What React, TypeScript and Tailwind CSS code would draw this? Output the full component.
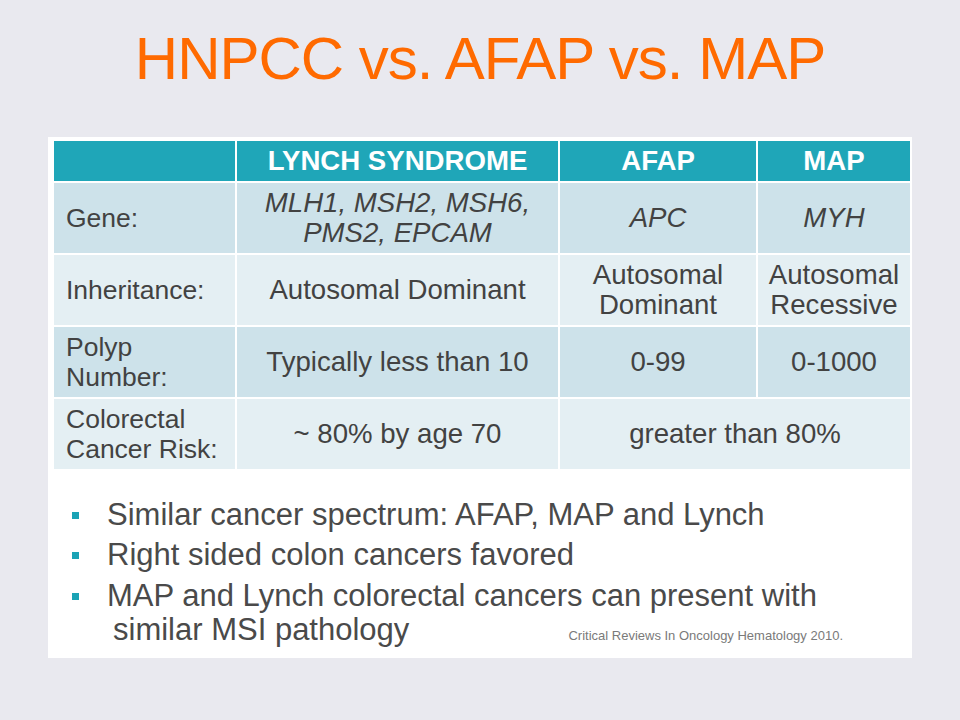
import React from "react";

const dark = "bg-[#cde2ea]";
const light = "bg-[#e4eff3]";

function Label({ children, bg }: { children: React.ReactNode; bg: string }) {
  return (
    <div className={`${bg} flex items-center pl-[12px] text-[26.5px] leading-[30px] text-[#424242]`}>
      {children}
    </div>
  );
}

function Val({ children, bg, className = "" }: { children: React.ReactNode; bg: string; className?: string }) {
  return (
    <div className={`${bg} flex items-center justify-center text-center text-[27.6px] leading-[30px] text-[#424242] ${className}`}>
      {children}
    </div>
  );
}

function Head({ children }: { children?: React.ReactNode }) {
  return (
    <div className="bg-[#1fa6b8] flex items-center justify-center text-white font-bold text-[27.6px] leading-none">
      {children}
    </div>
  );
}

function Bullet() {
  return <span className="w-[7px] h-[7px] bg-[#1aa3b5] ml-[18px] mr-[28px] shrink-0" />;
}

export default function App() {
  return (
    <div
      className="w-[960px] h-[720px] bg-[#e9e9ef] overflow-hidden flex flex-col"
      style={{ fontFamily: '"Liberation Sans", Arial, sans-serif' }}
    >
      <div className="h-[137px] pt-[29px] flex justify-center">
        <h1 className="text-[60px] leading-[60px] text-[#ff6a00] tracking-[-1px]">
          HNPCC vs. AFAP vs. MAP
        </h1>
      </div>
      <div className="ml-[48px] w-[864px] h-[521px] bg-white pt-[4px] pl-[6px] pr-[2px]">
        <div className="grid grid-cols-[181px_321px_196px_152px] grid-rows-[40px_70px_70px_70px_70px] gap-[2px]">
          <Head />
          <Head>LYNCH SYNDROME</Head>
          <Head>AFAP</Head>
          <Head>MAP</Head>

          <Label bg={dark}>Gene:</Label>
          <Val bg={dark} className="italic">
            <span>
              MLH1, MSH2, MSH6,
              <br />
              PMS2, EPCAM
            </span>
          </Val>
          <Val bg={dark} className="italic">APC</Val>
          <Val bg={dark} className="italic">MYH</Val>

          <Label bg={light}>Inheritance:</Label>
          <Val bg={light}>Autosomal Dominant</Val>
          <Val bg={light}>
            <span>
              Autosomal
              <br />
              Dominant
            </span>
          </Val>
          <Val bg={light}>
            <span>
              Autosomal
              <br />
              Recessive
            </span>
          </Val>

          <Label bg={dark}>
            <span>
              Polyp
              <br />
              Number:
            </span>
          </Label>
          <Val bg={dark}>Typically less than 10</Val>
          <Val bg={dark}>0-99</Val>
          <Val bg={dark}>0-1000</Val>

          <Label bg={light}>
            <span>
              Colorectal
              <br />
              Cancer Risk:
            </span>
          </Label>
          <Val bg={light}>~ 80% by age 70</Val>
          <Val bg={light} className="col-span-2">greater than 80%</Val>
        </div>

        <ul className="mt-[29px] text-[31px] leading-[34px] text-[#4a4a4a]">
          <li className="flex items-center">
            <Bullet />
            <span>Similar cancer spectrum: AFAP, MAP and Lynch</span>
          </li>
          <li className="flex items-center mt-[6px]">
            <Bullet />
            <span>Right sided colon cancers favored</span>
          </li>
          <li className="flex items-center mt-[7px]">
            <Bullet />
            <span>MAP and Lynch colorectal cancers can present with</span>
          </li>
          <li className="flex items-baseline">
            <span className="ml-[59px]">similar MSI pathology</span>
            <span className="ml-auto mr-[67px] text-[13px] text-[#7a7a7a]">
              Critical Reviews In Oncology Hematology 2010.
            </span>
          </li>
        </ul>
      </div>
    </div>
  );
}
